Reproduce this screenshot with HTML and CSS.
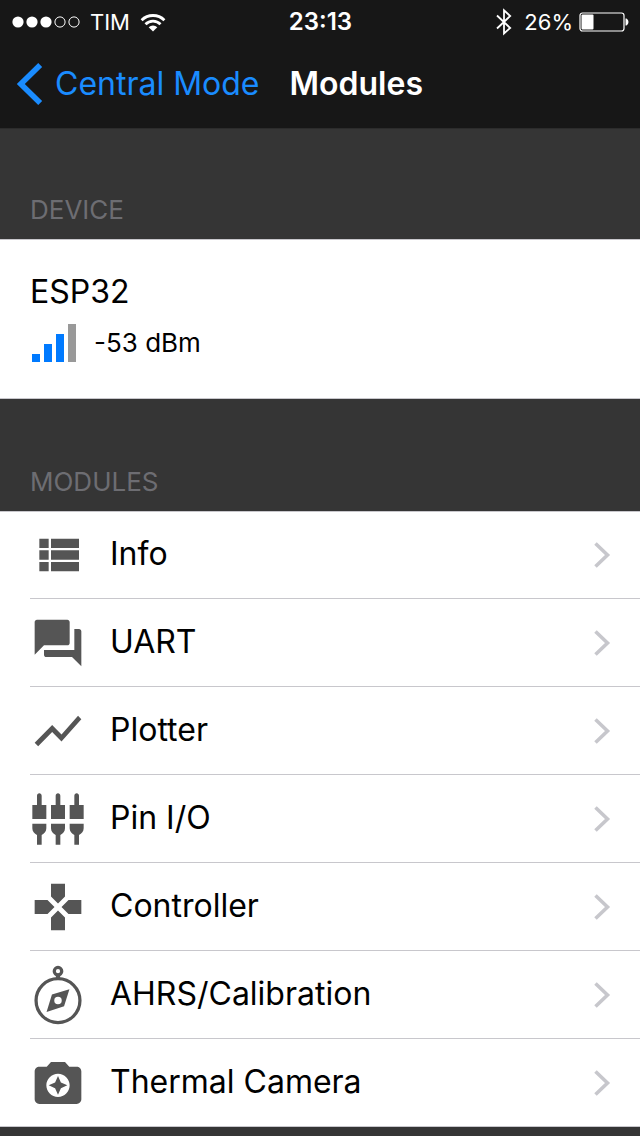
FILE: index.html
```
<!DOCTYPE html>
<html lang="en">

<head>
	<meta charset="utf-8">
	<title>Modules</title>
	<meta name="viewport" content="width=device-width, initial-scale=1.0">
	<link rel="stylesheet" href="styles.css">
</head>

<body>
	<header class="top">
		<div class="status">
			<div class="status-left">
				<svg class="dots" viewBox="0 0 68 12" aria-hidden="true">
					<g fill="#fff"><circle cx="6" cy="6" r="5.6"/><circle cx="20" cy="6" r="5.6"/><circle cx="34" cy="6" r="5.6"/></g>
					<g fill="none" stroke="#fff"><circle cx="48" cy="6" r="5.1"/><circle cx="62" cy="6" r="5.1"/></g>
				</svg>
				<span>TIM</span>
				<svg class="wifi" viewBox="0 0 26 19" aria-hidden="true">
					<g fill="none" stroke="#fff" stroke-width="2.8">
						<path d="M1.6 7.2a16.2 16.2 0 0 1 22.8 0"/>
						<path d="M5.5 11.2a10.6 10.6 0 0 1 15 0"/>
					</g>
					<path fill="#fff" d="M8.7 14.2a6.1 6.1 0 0 1 8.6 0L13 18.6z"/>
				</svg>
			</div>
			<time class="clock">23:13</time>
			<div class="status-right">
				<svg class="bluetooth" viewBox="0 0 16 28" aria-hidden="true">
					<path fill="none" stroke="#fff" stroke-width="1.8" d="M1 7.5L14.2 20 8 25.4V2.4L14.2 8 1 20.5"/>
				</svg>
				<span>26%</span>
				<svg class="battery" viewBox="0 0 50 20" aria-hidden="true">
					<rect x="1" y="1" width="44" height="18" rx="2.5" fill="none" stroke="#fff" stroke-width="1.2"/>
					<rect x="2.5" y="2.5" width="12" height="15" rx="1" fill="#fff"/>
					<path fill="#fff" d="M46.5 6.5h1q2 1 2 3.5t-2 3.5h-1z"/>
				</svg>
			</div>
		</div>
		<nav class="navbar">
			<a class="back" href="#">
				<svg class="back-arrow" viewBox="0 0 26 42" aria-hidden="true">
					<path fill="none" stroke="currentColor" stroke-width="5.6" d="M23.2 2L3.8 21l19.4 19"/>
				</svg>
				Central Mode
			</a>
			<h1>Modules</h1>
		</nav>
	</header>

	<main>
		<h2>DEVICE</h2>
		<section class="group device">
			<div class="device-name">ESP32</div>
			<div class="signal">
				<svg class="bars" viewBox="0 0 44 38" aria-hidden="true">
					<path fill="#007aff" d="M0 30h8v8H0zM12 20h8v18h-8zM24 10h8v28h-8z"/>
					<path fill="#999" d="M36 0h8v38h-8z"/>
				</svg>
				<span>-53 dBm</span>
			</div>
		</section>

		<h2>MODULES</h2>
		<ul class="group modules">
			<li><a href="#info">
				<svg class="icon" viewBox="0 0 24 24" aria-hidden="true"><path d="M4 14h4v-4H4v4zm0 5h4v-4H4v4zM4 9h4V5H4v4zm5 5h12v-4H9v4zm0 5h12v-4H9v4zM9 5v4h12V5H9z"/></svg>
				<span>Info</span>
				<svg class="arrow" viewBox="0 0 16 26" aria-hidden="true"><path d="M1.5 1.5L13.5 13l-12 11.5"/></svg>
			</a></li>
			<li><a href="#uart">
				<svg class="icon" viewBox="0 0 24 24" aria-hidden="true"><path d="M21 6h-2v9H6v2c0 .55.45 1 1 1h11l4 4V7c0-.55-.45-1-1-1zm-4 6V3c0-.55-.45-1-1-1H3c-.55 0-1 .45-1 1v14l4-4h10c.55 0 1-.45 1-1z"/></svg>
				<span>UART</span>
				<svg class="arrow" viewBox="0 0 16 26" aria-hidden="true"><path d="M1.5 1.5L13.5 13l-12 11.5"/></svg>
			</a></li>
			<li><a href="#plotter">
				<svg class="icon" viewBox="0 0 24 24" aria-hidden="true"><path d="M3.5 18.49l6-6.01 4 4L22 6.92l-1.41-1.41-7.09 7.97-4-4L2 16.99z"/></svg>
				<span>Plotter</span>
				<svg class="arrow" viewBox="0 0 16 26" aria-hidden="true"><path d="M1.5 1.5L13.5 13l-12 11.5"/></svg>
			</a></li>
			<li><a href="#pinio">
				<svg class="icon" viewBox="0 0 24 24" aria-hidden="true"><path d="M5 2c0-.55-.45-1-1-1s-1 .45-1 1v4H1v6h6V6H5V2zm4 14c0 1.3.84 2.4 2 2.82V23h2v-4.18c1.16-.41 2-1.51 2-2.82v-2H9v2zm-8 0c0 1.3.84 2.4 2 2.82V23h2v-4.18C6.16 18.4 7 17.3 7 16v-2H1v2zM21 6V2c0-.55-.45-1-1-1s-1 .45-1 1v4h-2v6h6V6h-2zm-8-4c0-.55-.45-1-1-1s-1 .45-1 1v4H9v6h6V6h-2V2zm4 14c0 1.3.84 2.4 2 2.82V23h2v-4.18c1.16-.41 2-1.51 2-2.82v-2h-6v2z"/></svg>
				<span>Pin I/O</span>
				<svg class="arrow" viewBox="0 0 16 26" aria-hidden="true"><path d="M1.5 1.5L13.5 13l-12 11.5"/></svg>
			</a></li>
			<li><a href="#controller">
				<svg class="icon" viewBox="0 0 24 24" aria-hidden="true"><path d="M15 7.5V2H9v5.5l3 3 3-3zM7.5 9H2v6h5.5l3-3-3-3zM9 16.5V22h6v-5.5l-3-3-3 3zM16.5 9l-3 3 3 3H22V9h-5.5z"/></svg>
				<span>Controller</span>
				<svg class="arrow" viewBox="0 0 16 26" aria-hidden="true"><path d="M1.5 1.5L13.5 13l-12 11.5"/></svg>
			</a></li>
			<li><a href="#ahrs">
				<svg class="icon" viewBox="0 0 24 24" aria-hidden="true">
					<g fill="none" stroke="#555">
						<circle cx="12" cy="14.4" r="9.4" stroke-width="1.4"/>
						<circle cx="12" cy="1.8" r="1.6" stroke-width="1.4"/>
						<path stroke-width="1.8" d="M12 3.6v1.2"/>
					</g>
					<path fill-rule="evenodd" d="M16.9 9.5l-7.5 2.3-2.3 7.5 7.5-2.5zM12 12.8a1.6 1.6 0 1 1 0 3.2 1.6 1.6 0 0 1 0-3.2z"/>
				</svg>
				<span>AHRS/Calibration</span>
				<svg class="arrow" viewBox="0 0 16 26" aria-hidden="true"><path d="M1.5 1.5L13.5 13l-12 11.5"/></svg>
			</a></li>
			<li><a href="#thermal">
				<svg class="icon" viewBox="0 0 24 24" aria-hidden="true"><path d="M9 3L7.17 5H4c-1.1 0-2 .9-2 2v12c0 1.1.9 2 2 2h16c1.1 0 2-.9 2-2V7c0-1.1-.9-2-2-2h-3.17L15 3H9zm3 15c-2.76 0-5-2.24-5-5s2.24-5 5-5 5 2.24 5 5-2.24 5-5 5zm0-1l1.25-2.75L16 13l-2.75-1.25L12 9l-1.25 2.75L8 13l2.75 1.25z"/></svg>
				<span>Thermal Camera</span>
				<svg class="arrow" viewBox="0 0 16 26" aria-hidden="true"><path d="M1.5 1.5L13.5 13l-12 11.5"/></svg>
			</a></li>
		</ul>
	</main>
</body>

</html>
```
FILE: styles.css
```
* {
    box-sizing: border-box;
}

body {
    margin: 0;
    background: #353535;
    color: #000;
    font-family: Inter, "Liberation Sans", sans-serif;
    font-size: 32px;
    line-height: 40px;
}

svg {
    display: block;
    flex: none;
    overflow: visible;
}

a {
    color: inherit;
    text-decoration: none;
}

/* status bar + nav bar */
.top {
    background: #171717;
    color: #fff;
    border-bottom: 1px solid #2c2c2c;
}

.status {
    display: grid;
    grid-template-columns: 1fr auto 1fr;
    align-items: center;
    height: 40px;
    padding: 2px 11px 0 12px;
    font-size: 22px;
}

.status-left,
.status-right {
    display: flex;
    align-items: center;
}

.status-left {
    gap: 10px;
}

.status-right {
    justify-content: flex-end;
    gap: 6px;
}

.clock {
    font-size: 24px;
    font-weight: 600;
}

.dots {
    width: 68px;
    height: 12px;
}

.wifi {
    width: 26px;
    height: 19px;
}

.bluetooth {
    width: 16px;
    height: 28px;
    margin-right: 6px;
}

.battery {
    width: 50px;
    height: 20px;
}

.navbar {
    display: flex;
    align-items: center;
    gap: 30px;
    height: 88px;
    padding: 0 17px;
}

.back {
    display: flex;
    align-items: center;
    gap: 12px;
    color: #1a8cff;
}

.back-arrow {
    width: 26px;
    height: 42px;
}

h1 {
    margin: 0;
    font-size: 32px;
    font-weight: 600;
}

/* grey section titles */
h2 {
    display: flex;
    align-items: flex-end;
    min-height: 110px;
    margin: 0;
    padding: 0 30px 9px;
    color: #6d6d72;
    font-size: 26px;
    font-weight: 400;
}

/* white blocks, hairline on top and bottom */
.group {
    margin: 0 0 2px;
    background: #fff;
    box-shadow: inset 0 1px #c8c7cc, inset 0 -1px #c8c7cc;
}

.device {
    padding: 33px 30px 36px;
}

.signal {
    display: flex;
    align-items: center;
    gap: 18px;
    margin-top: 11px;
    padding-left: 2px;
    font-size: 26px;
}

.bars {
    width: 44px;
    height: 38px;
}

.modules {
    padding: 0 0 0 30px;
    list-style: none;
}

.modules li {
    border-bottom: 1px solid #c8c7cc;
}

.modules li:last-child {
    border-bottom-color: transparent;
}

.modules a {
    display: flex;
    align-items: center;
    gap: 24px;
    min-height: 87px;
    padding-right: 30px;
}

.modules span {
    padding-bottom: 2px;
}

.icon {
    width: 56px;
    height: 56px;
    fill: #555;
}

.arrow {
    width: 16px;
    height: 26px;
    margin-left: auto;
    fill: none;
    stroke: #c7c7cc;
    stroke-width: 3.6;
}
```
